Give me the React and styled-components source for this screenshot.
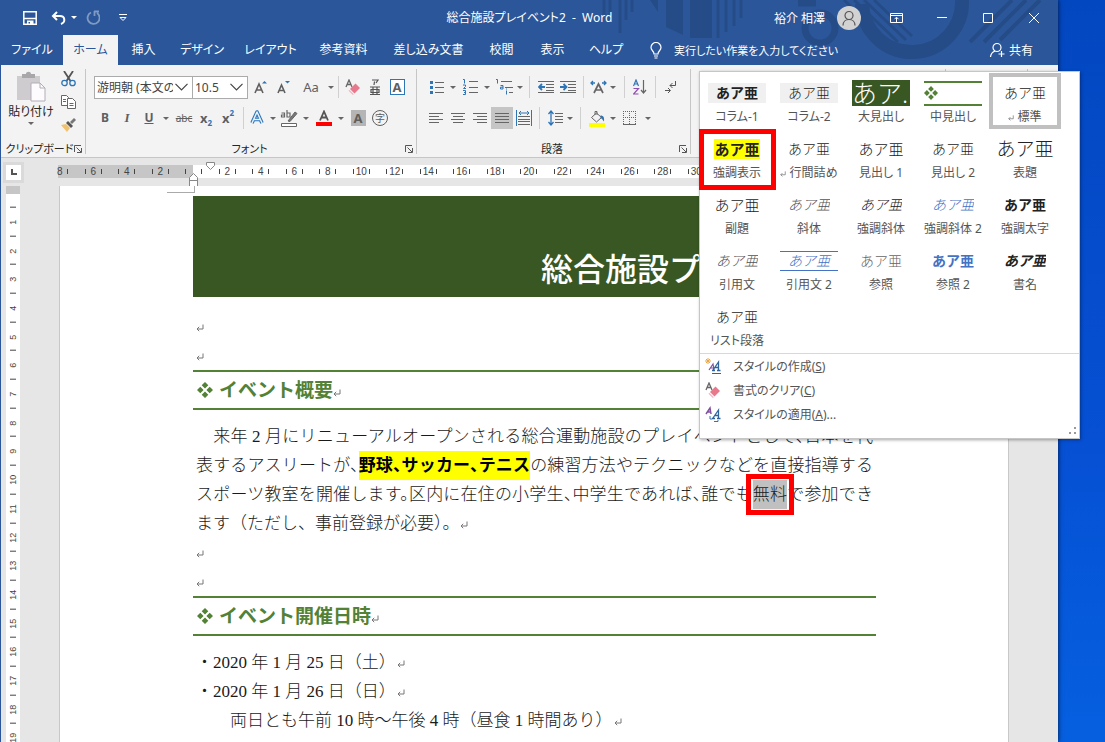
import React from "react";
import styled, { createGlobalStyle, ThemeProvider } from "styled-components";

const theme = {
  colors: {
    brand: "#2b579a",
    brandDark: "#254c87",
    ribbon: "#f3f3f3",
    workspace: "#e6e6e6",
    line: "#c6c6c6",
    text: "#262626",
    icon: "#5f5f5f",
    blue: "#2e75b6",
    green: "#538135",
    banner: "#385723",
    alert: "#ff0000",
    marker: "#ffff00",
  },
  fonts: {
    ui: '"Noto Sans", "Noto Sans CJK JP", sans-serif',
    body: '"Liberation Serif", "Noto Sans CJK JP", serif',
    ruler: '"Liberation Sans", sans-serif',
  },
};

const GlobalStyle = createGlobalStyle`
  * {
    box-sizing: border-box;
  }
  body {
    margin: 0;
    overflow: hidden;
  }
  button {
    border: 0;
    padding: 0;
    background: none;
    color: inherit;
    font: inherit;
  }
  svg {
    display: block;
    flex: none;
  }
`;

const Desktop = styled.div`
  height: 100vh;
  padding-right: 47px;
  background: linear-gradient(#0347c0, #0650d4 60%, #0560e0);
  font-family: ${(p) => p.theme.fonts.ui};
  font-size: 12px;
  font-feature-settings: "palt";
  color: ${(p) => p.theme.colors.text};
`;

const WordWindow = styled.main`
  position: relative;
  display: flex;
  flex-direction: column;
  height: 100%;
  border-left: 1px solid ${(p) => p.theme.colors.brand};
  background: ${(p) => p.theme.colors.workspace};
  box-shadow: 1px 0 4px rgb(0 0 0 / 50%);
`;

/* Title bar and tabs */

const Header = styled.header`
  position: relative;
  flex: none;
  background: ${(p) => p.theme.colors.brand};
  color: #fff;
`;

const HeaderArt = styled.svg`
  position: absolute;
  top: 0;
  right: 0;
  stroke: ${(p) => p.theme.colors.brandDark};
`;

const TitleBar = styled.div`
  position: relative;
  display: grid;
  grid-template-columns: 1fr auto 1fr;
  align-items: center;
  height: 35px;
`;

const QuickAccess = styled.div`
  display: flex;
  align-items: center;
  padding-left: 17px;
`;

const QuickButton = styled.button`
  display: flex;
  align-items: center;
  justify-content: center;
  width: ${(p) => p.$width}px;
  height: 24px;
  opacity: ${(p) => (p.$dim ? 0.4 : 1)};
`;

const DocTitle = styled.h1`
  margin: 0;
  font-size: 12px;
  font-weight: 400;
  line-height: 16px;
  white-space: pre;
`;

const Account = styled.div`
  display: flex;
  align-items: center;
  justify-content: flex-end;
  padding-right: 1px;
`;

const UserName = styled.span`
  margin-right: 12px;
`;

const Avatar = styled.span`
  display: flex;
  align-items: center;
  justify-content: center;
  width: 24px;
  height: 24px;
  margin-right: 12px;
  border-radius: 50%;
  background: #d2d2d2;
`;

const CaptionButton = styled.button`
  display: flex;
  align-items: center;
  justify-content: center;
  width: 46px;
  height: 32px;
`;

const TabBar = styled.nav`
  position: relative;
  display: flex;
  height: 30px;
`;

const Tab = styled.button`
  width: ${(p) => p.$width}px;
  line-height: 30px;
  text-align: center;
  background: ${(p) => (p.$active ? p.theme.colors.ribbon : "transparent")};
  color: ${(p) => (p.$active ? p.theme.colors.brand : "#fff")};
`;

const TellMe = styled.button`
  display: flex;
  align-items: center;
  gap: 12px;
  padding-left: 16px;
  font-size: 11px;
`;

const Share = styled.button`
  display: flex;
  align-items: center;
  gap: 4px;
  margin-left: auto;
  padding-right: 25px;
`;

/* Ribbon */

const Ribbon = styled.section`
  display: flex;
  flex: none;
  height: 93px;
  padding-top: 4px;
  border-bottom: 1px solid ${(p) => p.theme.colors.line};
  background: ${(p) => p.theme.colors.ribbon};
`;

const Group = styled.div`
  display: flex;
  flex-direction: column;
  flex: none;
  gap: 7px;
  width: ${(p) => p.$width}px;
  padding: 6px 0 0 ${(p) => p.$indent || 0}px;
  background: linear-gradient(${(p) => p.theme.colors.line}, ${(p) => p.theme.colors.line}) top right / 1px 85px
    no-repeat;
`;

const ToolRow = styled.div`
  display: flex;
  align-items: center;
  flex: none;
  height: 24px;
`;

const GroupLabel = styled.div`
  display: flex;
  align-items: center;
  flex: none;
  margin-top: 4px;
  padding-right: 4px;
  font-size: 11px;
  line-height: 16px;
  white-space: nowrap;
`;

const GroupName = styled.span`
  flex: 1;
  text-align: center;
`;

const ClipboardTools = styled.div`
  display: flex;
  flex: none;
  gap: 6px;
  height: 55px;
`;

const PasteButton = styled.button`
  display: flex;
  flex-direction: column;
  align-items: center;
  width: 52px;
  height: 55px;
  margin-top: -4px;
  line-height: 20px;
  white-space: nowrap;
`;

const ClipColumn = styled.div`
  display: flex;
  flex-direction: column;
  justify-content: space-between;
  margin-top: -7px;
  height: 68px;
`;

const Tool = styled.button`
  display: flex;
  align-items: center;
  justify-content: center;
  flex: none;
  width: ${(p) => p.$width || 22}px;
  height: 22px;
  background: ${(p) => (p.$pressed ? "#c5c5c5" : "transparent")};
  color: ${(p) => p.theme.colors.icon};
`;

const Letter = styled.span`
  font-size: ${(p) => p.$size || 13}px;
  font-weight: ${(p) => (p.$plain ? 400 : 700)};
  font-style: ${(p) => (p.$italic ? "italic" : "normal")};
  font-family: ${(p) => (p.$italic ? p.theme.fonts.body : "inherit")};
  text-decoration: ${(p) => p.$line || "none"};
  line-height: 16px;
`;

const Script = styled.span`
  align-self: ${(p) => (p.$up ? "flex-start" : "flex-end")};
  font-size: 8px;
  font-weight: 700;
  line-height: 12px;
  color: ${(p) => p.theme.colors.blue};
`;

const BoxedLetter = styled(Letter)`
  width: 15px;
  border: 1px solid ${(p) => (p.$filled ? "#b5b5b5" : p.theme.colors.blue)};
  background: ${(p) => (p.$filled ? "#b5b5b5" : "#fff")};
  line-height: 14px;
`;

const CircledLetter = styled(Letter)`
  width: 16px;
  border: 1px solid ${(p) => p.theme.colors.icon};
  border-radius: 50%;
  line-height: 14px;
`;

const Divider = styled.span`
  flex: none;
  width: ${(p) => p.$width}px;
  height: 22px;
  background: linear-gradient(#d0d0d0, #d0d0d0) center / 1px 100% no-repeat;
`;

const ComboBox = styled.label`
  display: flex;
  position: relative;
  align-items: center;
  flex: none;
  width: ${(p) => p.$width}px;
  height: 23px;
  margin-left: ${(p) => (p.$joined ? -1 : 0)}px;
  border: 1px solid #ababab;
  background: #fff;
  svg {
    position: absolute;
    right: 4px;
    pointer-events: none;
  }
`;

const ComboSelect = styled.select`
  appearance: none;
  width: calc(100% - 19px);
  padding: 0 0 0 2px;
  border: 0;
  background: none;
  color: #444;
  font: inherit;
  font-size: 12px;
  text-overflow: clip;
`;

/* Rulers */

const RulerRow = styled.div`
  display: flex;
  flex: none;
  align-items: center;
  height: 28px;
`;

const TabStop = styled.div`
  display: flex;
  align-items: center;
  justify-content: center;
  width: 21px;
  height: 21px;
  margin-left: 2px;
  border: 3px solid #dadada;
  background: #fff;
`;

const HorizontalRuler = styled.div`
  position: relative;
  display: grid;
  grid-template-columns: repeat(20, 1fr);
  align-items: center;
  width: 670px;
  height: 13px;
  margin-left: 19px;
  margin-top: -2px;
  background: linear-gradient(
    to right,
    transparent 15px,
    ${(p) => p.theme.colors.line} 15px,
    ${(p) => p.theme.colors.line} 150px,
    #fff 150px
  );
`;

const HorizontalMark = styled.span`
  height: 5px;
  margin: 0 25%;
  border: solid #444;
  border-width: 0 1px;
  border-left-color: ${(p) => (p.$first ? "transparent" : "#444")};
  font-family: ${(p) => p.theme.fonts.ruler};
  font-size: 10px;
  line-height: 5px;
  text-align: center;
  color: #444;
`;

const Indent = styled.svg`
  position: absolute;
  top: ${(p) => p.$top}px;
  left: ${(p) => p.$left}px;
`;

const Workspace = styled.div`
  display: flex;
  flex: 1;
  min-height: 0;
  overflow: hidden;
`;

const VerticalRuler = styled.div`
  flex: none;
  width: 14px;
  height: 600px;
  margin: 0 39px 0 5px;
  padding-top: 21px;
  background: linear-gradient(${(p) => p.theme.colors.line} 8px, #fff 8px);
`;

const VerticalMarks = styled.div`
  display: grid;
  grid-template-rows: repeat(19, 1fr);
  justify-content: center;
  height: 545px;
`;

const VerticalMark = styled.span`
  display: flex;
  align-items: center;
  justify-content: center;
  width: 6px;
  border-bottom: 1px solid #444;
  font-family: ${(p) => p.theme.fonts.ruler};
  font-size: 9px;
  line-height: 6px;
  color: #444;
  writing-mode: vertical-rl;
  rotate: 180deg;
`;

/* Document */

const Page = styled.article`
  position: relative;
  flex: 1;
  margin-right: 49px;
  padding: 10px 132px 0 133px;
  border: solid #c8c8c8;
  border-width: 0 1px;
  background: #fff;
  font-family: ${(p) => p.theme.fonts.body};
  font-feature-settings: normal;
  font-size: 17px;
  font-weight: 300;
  line-height: 29px;
  color: #1a1a1a;
  white-space: nowrap;
`;

const MarginCorner = styled.span`
  position: absolute;
  top: 0;
  left: 107px;
  width: 28px;
  height: 7px;
  border: solid #aaa;
  border-width: 0 1px 1px 0;
`;

const Banner = styled.h2`
  height: 101px;
  margin: 0 0 15px;
  padding: 54px 15px 0 0;
  overflow: hidden;
  background: ${(p) => p.theme.colors.banner};
  color: #fff;
  font-size: 32px;
  font-weight: 500;
  line-height: 40px;
  text-align: right;
`;

const SectionHeading = styled.h3`
  display: flex;
  align-items: center;
  gap: 6px;
  height: 40px;
  margin: 0 0 12px;
  padding-left: 4px;
  border: solid ${(p) => p.theme.colors.green};
  border-width: 2px 0;
  color: ${(p) => p.theme.colors.green};
  font-size: 19px;
  font-weight: 700;
`;

const Paragraph = styled.p`
  margin: 0;
  padding: 0 3px;
  text-indent: ${(p) => p.$indent || 0}em;
`;

const FullLine = styled.span`
  display: block;
  font-feature-settings: "halt";
  text-align: justify;
  text-align-last: justify;
`;

const Marked = styled.mark`
  padding: 5px 0;
  background: ${(p) => p.theme.colors.marker};
  color: #000;
  font-weight: 700;
`;

const Picked = styled.span`
  position: relative;
  padding: 5px 0;
  background: #c0c0c0;
  &::after {
    content: "";
    position: absolute;
    inset: -6px -7px;
    border: 5px solid ${(p) => p.theme.colors.alert};
  }
`;

const ReturnIcon = styled.svg`
  display: inline-block;
  margin-left: ${(p) => p.$gap || 0}px;
  vertical-align: 0;
`;

/* Style gallery */

const Gallery = styled.aside`
  position: absolute;
  top: 71px;
  right: -22px;
  width: 381px;
  border: 1px solid ${(p) => p.theme.colors.line};
  background: #fff;
  box-shadow: 1px 1px 3px rgb(0 0 0 / 35%);
  color: #555;
`;

const StyleGrid = styled.div`
  display: grid;
  grid-template-columns: repeat(5, 72px);
  grid-auto-rows: 56px;
  padding: 1px 1px 0;
`;

const StyleCell = styled.button`
  position: relative;
  display: flex;
  flex-direction: column;
  align-items: center;
  padding-top: 4px;
  box-shadow: ${(p) => (p.$current ? "inset 0 0 0 4px #c0c0c0" : "none")};
  white-space: nowrap;
  &::after {
    content: "";
    display: ${(p) => (p.$framed ? "block" : "none")};
    position: absolute;
    inset: 0 -3px -5px -2px;
    border: 5px solid ${(p) => p.theme.colors.alert};
  }
`;

const SampleArea = styled.span`
  display: flex;
  align-items: center;
  justify-content: center;
  width: 58px;
  height: 32px;
`;

const Sample = styled.span`
  display: flex;
  align-items: center;
  justify-content: ${(p) => (p.$start ? "flex-start" : "center")};
  flex: ${(p) => (p.$wide ? "1" : "none")};
  overflow: hidden;
  height: ${(p) => p.$height || 20}px;
  border: solid ${(p) => p.$rule || "transparent"};
  border-width: ${(p) => (p.$rule ? p.$ruleWidth || 1 : 0)}px 0;
  background: ${(p) => p.$fill || "transparent"};
  color: ${(p) => p.$color || "#222"};
  font-size: ${(p) => p.$size || 14}px;
  font-style: ${(p) => (p.$italic ? "italic" : "normal")};
  font-weight: ${(p) => (p.$bold ? 700 : 300)};
  font-feature-settings: normal;
  line-height: 20px;
`;

const StyleName = styled.span`
  line-height: 16px;
`;

const MenuList = styled.div`
  position: relative;
  padding: 0 0 12px;
  border-top: 1px solid #d8d8d8;
`;

const MenuItem = styled.button`
  display: flex;
  align-items: center;
  gap: 12px;
  width: 100%;
  height: 24px;
  padding-left: 5px;
`;

const Grip = styled.svg`
  position: absolute;
  right: 3px;
  bottom: 3px;
`;

const DropArrow = ({ width, label }) => (
  <Tool $width={width} aria-label={label}>
    <svg width="6" height="3" viewBox="0 0 6 3">
      <path d="M0 0h6L3 3z" fill="#666" />
    </svg>
  </Tool>
);

const Chevron = () => (
  <svg width="13" height="8" viewBox="0 0 13 8" fill="none" stroke="#444" strokeWidth="1.2">
    <path d="M.5 .8l6 6 6-6" />
  </svg>
);

const Launcher = () => (
  <svg width="8" height="8" viewBox="0 0 8 8" fill="none" stroke="#555">
    <path d="M.5 7V.5H7M2.5 2.5L7 7M7.500 3v4.500H3" />
  </svg>
);

const Return = ({ gap, size = 8 }) => (
  <ReturnIcon $gap={gap} width={size} height={size} viewBox="0 0 8 8" fill="none" stroke="#777">
    <path d="M7 .5v4.500H1M3.200 2.800L1 5l2.200 2.200" />
  </ReturnIcon>
);

const Diamonds = ({ size = 16 }) => (
  <svg width={size} height={size} viewBox="0 0 16 16" fill="#538135">
    <path d="M8 0l3.300 3.300L8 6.600 4.700 3.300zM8 9.400l3.300 3.300L8 16l-3.300-3.300zM3.300 4.700L6.600 8l-3.300 3.300L0 8zM12.700 4.700L16 8l-3.300 3.300L9.400 8z" />
  </svg>
);

const Person = ({ stroke, plus }) => (
  <svg width="16" height="16" viewBox="0 0 16 16" fill="none" stroke={stroke} strokeWidth="1.2">
    <circle cx="8" cy="5.500" r="4" />
    <path d={plus ? "M1.500 15c.3-3 2-5 4.500-6M12.500 9v6M9.500 12h6" : "M2 15.500c0-3.500 2.500-6 6-6s6 2.500 6 6"} />
  </svg>
);

const Eraser = () => (
  <svg width="16" height="16" viewBox="0 0 16 16">
    <path d="M1 8L4 1l3 7M2 5.500h4" fill="none" stroke="#666" strokeWidth="1.3" />
    <path d="M5 10l5.500-5.500 4.500 4.500L9.500 14.500z" fill="#e8798d" />
    <path d="M4.300 10.700l4.500 4.500-1 .8-4.300-4.300z" fill="#f4b5c0" />
  </svg>
);

const Lines = ({ widths, align }) =>
  widths.map((w, i) => {
    const offset = align === "left" ? 0 : align === "right" ? 14 - w : (14 - w) / 2;
    return <path key={i} d={`M${offset} ${1.5 + i * 3}h${w}`} />;
  });

const AlignIcon = ({ align, widths }) => (
  <svg width="14" height="12" viewBox="0 0 14 12" stroke="#666">
    <Lines widths={widths} align={align} />
  </svg>
);

const BulletIcon = () => (
  <svg width="14" height="15" viewBox="0 0 14 15" stroke="#666">
    <path d="M5 2.500h9M5 7.500h9M5 12.500h9" />
    <path d="M0 2.500h3M0 7.500h3M0 12.500h3" stroke="#2e75b6" strokeWidth="3" />
  </svg>
);

const NumberIcon = () => (
  <svg width="15" height="16" viewBox="0 0 15 16" fill="none" stroke="#666">
    <path d="M6 2.500h9M6 8.500h9M6 13.500h9" />
    <path d="M0 .5h1.500v4M0 6h2.500v1.500L.5 9.500H3M0 11.500h2.500v4H0M1 13.500h1.500" stroke="#2e75b6" />
  </svg>
);

const MultiLevelIcon = () => (
  <svg width="17" height="16" viewBox="0 0 17 16" fill="none" stroke="#666">
    <path d="M5 2.500h11M9 8.500h8M13 13.500h4" />
    <path d="M0 .5h1.500v4M4.500 6.500h2.500v3.500H4.500V8.200H7M10.500 11.500v4M10.500 9.500v1" stroke="#2e75b6" />
  </svg>
);

const IndentIcon = ({ out }) => (
  <svg width="16" height="14" viewBox="0 0 16 14" fill="none" stroke="#666">
    <path d="M0 1.500h16M8 4.500h8M8 7.500h8M8 10.500h8M0 12.500h16" />
    <path d={out ? "M7 7H1M4 4L1 7l3 3" : "M0 7h6M3.500 4l3 3-3 3"} stroke="#2e75b6" strokeWidth="1.800" />
  </svg>
);

const CharWidthIcon = () => (
  <svg width="17" height="14" viewBox="0 0 17 14" fill="none">
    <path d="M4 13l4.500-9 4.500 9M6 10h5" stroke="#666" strokeWidth="1.700" />
    <path d="M5 3H1M3 1L1 3l2 2M12 3h4M14 1l2 2-2 2" stroke="#2e75b6" strokeWidth="1.300" />
  </svg>
);

const SortIcon = () => (
  <svg width="14" height="16" viewBox="0 0 14 16" fill="none">
    <path d="M.5 7L3 1l2.500 6M1.500 5h3" stroke="#2e75b6" strokeWidth="1.200" />
    <path d="M.5 9.500h5l-5 5.500h5" stroke="#8e4fae" strokeWidth="1.200" />
    <path d="M10.500 1v13M8 11l2.500 3 2.500-3" stroke="#666" strokeWidth="1.200" />
  </svg>
);

const MarksIcon = () => (
  <svg width="12" height="14" viewBox="0 0 12 14" fill="none" stroke="#555">
    <path d="M10.500 1v4.500H5M7.500 3L5 5.500 7.500 8M0 10.500h5M3 8l2.500 2.500L3 13" />
  </svg>
);

const DistributeIcon = () => (
  <svg width="16" height="16" viewBox="0 0 16 16" fill="none">
    <path d="M.5 0v16M15.500 0v16M3 3h10M5 1L3 3l2 2M11 1l2 2-2 2" stroke="#2e75b6" />
    <path d="M2 6.500h12M2 9.500h12M2 11.500h12M2 14.500h12" stroke="#666" />
  </svg>
);

const LineSpacingIcon = () => (
  <svg width="15" height="16" viewBox="0 0 15 16" fill="none">
    <path d="M3 1v14M.5 4L3 1l2.500 3M.5 12L3 15l2.500-3" stroke="#2e75b6" strokeWidth="1.300" />
    <path d="M7 3.500h8M7 6.500h8M7 9.500h8M7 12.500h8" stroke="#666" />
  </svg>
);

const FillIcon = () => (
  <svg width="17" height="17" viewBox="0 0 17 17" fill="none">
    <path d="M2.500 7.500l5-4.500 5 4.500-5 4.500zM6 5V1.500h2V5" stroke="#666" />
    <path d="M11.500 5.500c3 0 4 2 3.500 6-1-.5-1.500-3-3.500-3.500z" fill="#2e75b6" />
    <path d="M0 13h16v4H0z" fill="#ffff00" />
  </svg>
);

const BorderIcon = () => (
  <svg width="14" height="14" viewBox="0 0 14 14" fill="none" stroke="#666">
    <path d="M.5 0v13M6.500 0v13M12.500 0v13M0 .5h13M0 6.500h13" strokeDasharray="1 1" />
    <path d="M0 13.500h13" />
  </svg>
);

const OutlineA = () => (
  <svg width="14" height="16" viewBox="0 0 14 16" fill="none" strokeLinejoin="round">
    <path d="M2 13L7 2l5 11M4 9.500h6" stroke="#2e75b6" strokeWidth="3.600" />
    <path d="M2 13L7 2l5 11M4 9.500h6" stroke="#e6f0fa" strokeWidth="1.500" />
  </svg>
);

const HighlighterIcon = () => (
  <svg width="18" height="18" viewBox="0 0 18 18" fill="none" stroke="#666">
    <path d="M1.500 4h3v4h-3V6h3M7 1v7h3V4H7" strokeWidth="1.200" />
    <path d="M8 12l7-9 2 1.500-7 8z" fill="#777" />
    <path d="M1.500 14.500h15v3h-15z" fill="#fff" />
  </svg>
);

const FontColorIcon = () => (
  <svg width="16" height="16" viewBox="0 0 16 16" fill="none">
    <path d="M4 10.500l4-9 4 9M5.500 7.500h5" stroke="#555" strokeWidth="1.800" />
    <path d="M0 12h16v4H0z" fill="#ff0000" />
  </svg>
);

const SizeIcon = ({ grow }) => (
  <svg width="13" height="15" viewBox="0 0 13 15" fill="none">
    <path
      d={grow ? "M1 13l4-9 4 9M2.500 10h5" : "M1 13l3.500-8L8 13M2.300 10.500h4.400"}
      stroke="#5f5f5f"
      strokeWidth="1.600"
    />
    <path d={grow ? "M8 3.500L10.500 1 13 3.500z" : "M8 1h5l-2.500 2.500z"} fill="#2e75b6" />
  </svg>
);

const PasteIcon = () => (
  <svg width="30" height="31" viewBox="0 0 30 31">
    <path d="M1 5h23v24H1z" fill="#cfcccf" />
    <path d="M6 7V3h4c0-3 5-3 5 0h4v4z" fill="#aaa7aa" />
    <path d="M15 12h9l5 5v13H15z" fill="#fdfbfd" stroke="#b3adb8" />
    <path d="M24 12v5h5" fill="none" stroke="#b3adb8" />
  </svg>
);

const CutIcon = () => (
  <svg width="15" height="16" viewBox="0 0 15 16" fill="none">
    <path d="M3 0l6.500 10M12 0L5.500 10" stroke="#555" strokeWidth="1.800" />
    <circle cx="3.500" cy="12" r="2.700" stroke="#2e75b6" strokeWidth="1.300" />
    <circle cx="11.500" cy="12" r="2.700" stroke="#2e75b6" strokeWidth="1.300" />
  </svg>
);

const CopyIcon = () => (
  <svg width="15" height="14" viewBox="0 0 15 14" fill="#fff" stroke="#666">
    <path d="M.5 .5h5l2 2v8h-7z" />
    <path d="M6.500 3.500h5l3 3v7h-8z" />
    <path d="M2 4.500h3M2 6.500h3M8.500 8.500h4M8.500 10.500h4" stroke="#2e75b6" />
  </svg>
);

const BrushIcon = () => (
  <svg width="16" height="14" viewBox="0 0 16 14">
    <path d="M1 7l5-1 4 4-3 4z" fill="#f0c26f" />
    <path d="M6 5l2-2 5 5-2 2z" fill="#555" />
    <path d="M10 4l4-4 2 2-4 4z" fill="#777" />
  </svg>
);

const StyleMenuIcon = ({ kind }) => (
  <svg width="16" height="16" viewBox="0 0 16 16" fill="none">
    {kind === "new" ? (
      <>
        <path d="M3 0v6M0 3h6M1 1l4 4M5 1L1 5" stroke="#eba743" />
        <path d="M4 12l4-6 1 6M5.500 10h3" stroke="#8250a0" strokeWidth="1.200" />
      </>
    ) : (
      <path d="M1 8l4-6 1 6M2.500 6h3" stroke="#8250a0" strokeWidth="1.500" />
    )}
    <path d="M8 12l5.500-8v8M10 9.500h3M7 12.500h3M12 12.500h3.500" stroke="#2e659e" strokeWidth="1.300" />
    {kind === "new" ? (
      <path d="M7 15.500h9" stroke="#2e659e" />
    ) : (
      <path d="M9 15.500h4V14M5 10v3h2" stroke="#2e75b6" />
    )}
  </svg>
);

const tabs = [
  { name: "ファイル", width: 62 },
  { name: "ホーム", width: 55, active: true },
  { name: "挿入", width: 51 },
  { name: "デザイン", width: 66 },
  { name: "レイアウト", width: 71 },
  { name: "参考資料", width: 75 },
  { name: "差し込み文書", width: 95 },
  { name: "校閲", width: 51 },
  { name: "表示", width: 51 },
  { name: "ヘルプ", width: 56 },
];

const styleItems = [
  { name: "コラム-1", wide: true, fill: "#f0f0f0", bold: true },
  { name: "コラム-2", wide: true, fill: "#f0f0f0" },
  { name: "大見出し", text: "あア.", wide: true, start: true, fill: "#385723", color: "#fff", size: 25, height: 26 },
  {
    name: "中見出し",
    text: <Diamonds size={14} />,
    wide: true,
    start: true,
    rule: "#538135",
    ruleWidth: 2,
    height: 25,
  },
  { name: "標準", mark: true, current: true },
  { name: "強調表示", fill: "#ffff00", bold: true, framed: true, size: 15 },
  { name: "行間詰め", mark: true },
  { name: "見出し 1", size: 15 },
  { name: "見出し 2" },
  { name: "表題", size: 19, height: 24 },
  { name: "副題", size: 15 },
  { name: "斜体", italic: true, color: "#555" },
  { name: "強調斜体", italic: true },
  { name: "強調斜体 2", italic: true, color: "#4472c4" },
  { name: "強調太字", bold: true },
  { name: "引用文", italic: true, color: "#555" },
  { name: "引用文 2", italic: true, color: "#4472c4", wide: true, rule: "#4472c4" },
  { name: "参照", color: "#666" },
  { name: "参照 2", bold: true, color: "#4472c4" },
  { name: "書名", bold: true, italic: true },
  { name: "リスト段落" },
];

const horizontalMarks = Array.from({ length: 20 }, (_, i) => Math.abs(i * 2 - 8));
const verticalMarks = Array.from({ length: 19 }, (_, i) => i + 1);

const WordHeader = () => (
  <Header>
    <HeaderArt width="470" height="65" viewBox="0 0 470 65" fill="none" aria-hidden="true">
      <path d="M16 0v16M22 0v22M32 0v33M38 0v20M44 0v12" strokeWidth="3" />
      <path d="M62 0h8v12zM78 0h17v35l-17-8zM102 0h22v38h-22z" fill="#254c87" stroke="none" />
      <path d="M130 0v38M138 0v32M146 0v26M153 0v18" strokeWidth="3" />
      <path d="M210 3h18" strokeWidth="7" />
      <circle cx="232" cy="28" r="15" strokeWidth="7" />
      <path d="M256 0l48 46M266 0l44 42M276 0l42 40M286 0l38 36" strokeWidth="3" />
      <path d="M274 4a50 50 0 0 0 100-4" strokeWidth="14" />
      <path d="M424 0l-42 42M438 0l-42 42M452 0l-40 40" strokeWidth="4" />
    </HeaderArt>
    <TitleBar>
      <QuickAccess>
        <QuickButton $width={24} aria-label="上書き保存">
          <svg width="14" height="14" viewBox="0 0 14 14" fill="none" stroke="#fff" strokeWidth="1.500">
            <path d="M.8 .8h12.400v12.400H.8z" />
            <path d="M1 7.500h12" />
            <path d="M4 9.500h6.500V13H7v-2H5.500v2H4z" fill="#fff" stroke="none" />
          </svg>
        </QuickButton>
        <QuickButton $width={32} aria-label="元に戻す">
          <svg width="15" height="14" viewBox="0 0 15 14" fill="none" stroke="#fff" strokeWidth="2">
            <path d="M6 1L2 5l4 4M2 5h7c5 0 6 6 1 8" />
          </svg>
        </QuickButton>
        <QuickButton $width={0} aria-label="元に戻す履歴">
          <svg width="6" height="3" viewBox="0 0 6 3">
            <path d="M0 0h6L3 3z" fill="#fff" />
          </svg>
        </QuickButton>
        <QuickButton $width={38} $dim aria-label="やり直し">
          <svg width="14" height="15" viewBox="0 0 14 15" fill="none" stroke="#fff" strokeWidth="1.800">
            <path d="M8 1.500h5M8.500 1v5M5 2.500a6 6 0 1 0 6 .5" />
          </svg>
        </QuickButton>
        <QuickButton $width={22} aria-label="クイック アクセス ツール バーのユーザー設定">
          <svg width="8" height="8" viewBox="0 0 8 8" fill="none" stroke="#fff">
            <path d="M0 .5h8M1 3.500h6L4 6.500z" />
          </svg>
        </QuickButton>
      </QuickAccess>
      <DocTitle>総合施設プレイベント2  -  Word</DocTitle>
      <Account>
        <UserName>裕介 相澤</UserName>
        <Avatar>
          <Person stroke="#555" />
        </Avatar>
        <CaptionButton aria-label="リボンの表示オプション">
          <svg width="13" height="10" viewBox="0 0 13 10" fill="none" stroke="#fff">
            <path d="M.5 .5h12v9H.5zM.5 2.500h12M6.500 9V4.500M4.500 6.200l2-2 2 2" />
          </svg>
        </CaptionButton>
        <CaptionButton aria-label="最小化">
          <svg width="10" height="1">
            <path d="M0 .5h10" stroke="#fff" />
          </svg>
        </CaptionButton>
        <CaptionButton aria-label="最大化">
          <svg width="10" height="10" fill="none" stroke="#fff">
            <path d="M.5 .5h9v9h-9z" />
          </svg>
        </CaptionButton>
        <CaptionButton aria-label="閉じる">
          <svg width="10" height="10" fill="none" stroke="#fff">
            <path d="M0 0l10 10M10 0L0 10" />
          </svg>
        </CaptionButton>
      </Account>
    </TitleBar>
    <TabBar>
      {tabs.map((tab) => (
        <Tab key={tab.name} $width={tab.width} $active={tab.active}>
          {tab.name}
        </Tab>
      ))}
      <TellMe>
        <svg width="12" height="17" viewBox="0 0 12 17" fill="none" stroke="#fff" strokeWidth="1.200">
          <path d="M4 12c0-3-3-3.500-3-6.500a5 5 0 0 1 10 0C11 8.500 8 9 8 12zM4 14h4M4.500 16h3" />
        </svg>
        実行したい作業を入力してください
      </TellMe>
      <Share>
        <Person stroke="#fff" plus />
        共有
      </Share>
    </TabBar>
  </Header>
);

const LabelRow = ({ children }) => (
  <GroupLabel>
    <GroupName>{children}</GroupName>
    <Launcher />
  </GroupLabel>
);

const WordRibbon = () => (
  <Ribbon>
    <Group $width={85} $indent={4}>
      <ClipboardTools>
        <PasteButton>
          <PasteIcon />
          貼り付け
          <svg width="6" height="3" viewBox="0 0 6 3">
            <path d="M0 0h6L3 3z" fill="#666" />
          </svg>
        </PasteButton>
        <ClipColumn>
          <Tool $width={10} aria-label="切り取り">
            <CutIcon />
          </Tool>
          <Tool $width={10} aria-label="コピー">
            <CopyIcon />
          </Tool>
          <Tool $width={10} aria-label="書式のコピー">
            <BrushIcon />
          </Tool>
        </ClipColumn>
      </ClipboardTools>
      <LabelRow>クリップボード</LabelRow>
    </Group>

    <Group $width={331} $indent={8}>
      <ToolRow>
        <ComboBox $width={99}>
          <ComboSelect aria-label="フォント">
            <option>游明朝 (本文のフォント)</option>
          </ComboSelect>
          <Chevron />
        </ComboBox>
        <ComboBox $width={56} $joined>
          <ComboSelect aria-label="フォント サイズ">
            <option>10.5</option>
          </ComboSelect>
          <Chevron />
        </ComboBox>
        <Tool $width={24} aria-label="拡大">
          <SizeIcon grow />
        </Tool>
        <Tool aria-label="縮小">
          <SizeIcon />
        </Tool>
        <Tool $width={34} aria-label="文字種の変換">
          <Letter $plain>Aa</Letter>
        </Tool>
        <DropArrow width={6} label="文字種" />
        <Divider $width={8} />
        <Tool aria-label="書式のクリア">
          <Eraser />
        </Tool>
        <Tool aria-label="ルビ">
          <svg width="12" height="17" viewBox="0 0 12 17" fill="none" stroke="#555" strokeWidth="1.200">
            <path d="M3 1h6L7 4M5.500 2.500L5 6M1 8h10M1 15.500h10M4 8v7M8 8v7M2 10.500h8v3H2z" />
          </svg>
        </Tool>
        <Tool aria-label="囲み線">
          <BoxedLetter>A</BoxedLetter>
        </Tool>
      </ToolRow>
      <ToolRow>
        <Tool>
          <Letter $size={12}>B</Letter>
        </Tool>
        <Tool>
          <Letter $italic>I</Letter>
        </Tool>
        <Tool>
          <Letter $size={12} $line="underline">
            U
          </Letter>
        </Tool>
        <DropArrow width={12} label="下線の種類" />
        <Tool $width={24}>
          <Letter $plain $size={10} $line="line-through">
            abc
          </Letter>
        </Tool>
        <Tool $width={20}>
          <Letter>x</Letter>
          <Script>2</Script>
        </Tool>
        <Tool $width={24}>
          <Letter>x</Letter>
          <Script $up>2</Script>
        </Tool>
        <Divider $width={6} />
        <Tool aria-label="文字の効果">
          <OutlineA />
        </Tool>
        <DropArrow width={10} label="文字の効果の種類" />
        <Tool aria-label="蛍光ペンの色">
          <HighlighterIcon />
        </Tool>
        <DropArrow width={12} label="蛍光ペンの種類" />
        <Tool $width={24} aria-label="フォントの色">
          <FontColorIcon />
        </Tool>
        <DropArrow width={10} label="フォントの色の種類" />
        <Tool $width={24} aria-label="文字の網かけ">
          <BoxedLetter $filled>A</BoxedLetter>
        </Tool>
        <Tool $width={20} aria-label="囲い文字">
          <CircledLetter $plain $size={10}>
            字
          </CircledLetter>
        </Tool>
      </ToolRow>
      <LabelRow>フォント</LabelRow>
    </Group>

    <Group $width={274} $indent={8}>
      <ToolRow>
        <Tool $width={24} aria-label="箇条書き">
          <BulletIcon />
        </Tool>
        <DropArrow width={8} label="箇条書きの種類" />
        <Tool $width={26} aria-label="段落番号">
          <NumberIcon />
        </Tool>
        <DropArrow width={8} label="段落番号の種類" />
        <Tool $width={26} aria-label="アウトライン">
          <MultiLevelIcon />
        </Tool>
        <DropArrow width={6} label="アウトラインの種類" />
        <Divider $width={12} />
        <Tool aria-label="インデントを減らす">
          <IndentIcon out />
        </Tool>
        <Tool aria-label="インデントを増やす">
          <IndentIcon />
        </Tool>
        <Divider $width={8} />
        <Tool aria-label="拡張書式">
          <CharWidthIcon />
        </Tool>
        <DropArrow width={8} label="拡張書式の種類" />
        <Divider $width={14} />
        <Tool $width={18} aria-label="並べ替え">
          <SortIcon />
        </Tool>
        <Divider $width={12} />
        <Tool $width={20} aria-label="編集記号">
          <MarksIcon />
        </Tool>
      </ToolRow>
      <ToolRow>
        <Tool aria-label="左揃え">
          <AlignIcon align="left" widths={[14, 10, 14, 10]} />
        </Tool>
        <Tool aria-label="中央揃え">
          <AlignIcon align="center" widths={[14, 10, 14, 10]} />
        </Tool>
        <Tool aria-label="右揃え">
          <AlignIcon align="right" widths={[14, 10, 14, 10]} />
        </Tool>
        <Tool $pressed aria-label="両端揃え">
          <AlignIcon align="left" widths={[14, 14, 14, 14]} />
        </Tool>
        <Tool aria-label="均等割り付け">
          <DistributeIcon />
        </Tool>
        <Divider $width={8} />
        <Tool $width={24} aria-label="行と段落の間隔">
          <LineSpacingIcon />
        </Tool>
        <DropArrow width={6} label="間隔の種類" />
        <Divider $width={14} />
        <Tool $width={20} aria-label="塗りつぶし">
          <FillIcon />
        </Tool>
        <DropArrow width={12} label="塗りつぶしの色" />
        <Tool aria-label="罫線">
          <BorderIcon />
        </Tool>
        <DropArrow width={14} label="罫線の種類" />
      </ToolRow>
      <LabelRow>段落</LabelRow>
    </Group>
    <Group $width={255} />
    <Group $width={82} />
  </Ribbon>
);

const WordDocument = () => (
  <Page>
    <MarginCorner />
    <Banner>総合施設プレイベント</Banner>
    <Paragraph>
      <Return />
    </Paragraph>
    <Paragraph>
      <Return />
    </Paragraph>
    <SectionHeading>
      <Diamonds />
      <span>
        イベント概要
        <Return />
      </span>
    </SectionHeading>
    <Paragraph>
      <FullLine>{"　来年 2 月にリニューアルオープンされる総合運動施設のプレイベントとして、日本を代"}</FullLine>
      <FullLine>
        表するアスリートが、<Marked>野球、サッカー、テニス</Marked>の練習方法やテクニックなどを直接指導する
      </FullLine>
      <FullLine>
        スポーツ教室を開催します。区内に在住の小学生、中学生であれば、誰でも<Picked>無料</Picked>で参加でき
      </FullLine>
      ます（ただし、事前登録が必要）。
      <Return />
    </Paragraph>
    <Paragraph>
      <Return />
    </Paragraph>
    <Paragraph>
      <Return />
    </Paragraph>
    <SectionHeading>
      <Diamonds />
      <span>
        イベント開催日時
        <Return />
      </span>
    </SectionHeading>
    <Paragraph>
      ・2020 年 1 月 25 日（土）
      <Return gap={1} />
    </Paragraph>
    <Paragraph>
      ・2020 年 1 月 26 日（日）
      <Return gap={1} />
    </Paragraph>
    <Paragraph $indent={2}>
      両日とも午前 10 時～午後 4 時（昼食 1 時間あり）
      <Return gap={1} />
    </Paragraph>
  </Page>
);

const StyleGallery = () => (
  <Gallery>
    <StyleGrid>
      {styleItems.map((item) => (
        <StyleCell key={item.name} $current={item.current} $framed={item.framed}>
          <SampleArea>
            <Sample
              $wide={item.wide}
              $start={item.start}
              $fill={item.fill}
              $rule={item.rule}
              $ruleWidth={item.ruleWidth}
              $color={item.color}
              $size={item.size}
              $height={item.height}
              $bold={item.bold}
              $italic={item.italic}
            >
              {item.text || "あア亜"}
            </Sample>
          </SampleArea>
          <StyleName>
            {item.mark && <Return size={6} />} {item.name}
          </StyleName>
        </StyleCell>
      ))}
    </StyleGrid>
    <MenuList>
      <MenuItem>
        <StyleMenuIcon kind="new" />
        <span>
          スタイルの作成(<u>S</u>)
        </span>
      </MenuItem>
      <MenuItem>
        <Eraser />
        <span>
          書式のクリア(<u>C</u>)
        </span>
      </MenuItem>
      <MenuItem>
        <StyleMenuIcon kind="apply" />
        <span>
          スタイルの適用(<u>A</u>)...
        </span>
      </MenuItem>
      <Grip width="8" height="8" viewBox="0 0 8 8" fill="#999">
        <path d="M6 0h2v2H6zM6 5h2v2H6zM1 5h2v2H1z" />
      </Grip>
    </MenuList>
  </Gallery>
);

const App = () => {
  return (
    <ThemeProvider theme={theme}>
      <GlobalStyle />
      <Desktop>
        <WordWindow>
          <WordHeader />
          <WordRibbon />
          <RulerRow>
            <TabStop>
              <svg width="6" height="6" viewBox="0 0 6 6">
                <path d="M1 0v5h5" fill="none" stroke="#555" strokeWidth="2" />
              </svg>
            </TabStop>
            <HorizontalRuler>
              {horizontalMarks.map((mark, i) => (
                <HorizontalMark key={i} $first={i === 0}>
                  {mark || ""}
                </HorizontalMark>
              ))}
              <Indent $top={-3} $left={163} width="9" height="8" viewBox="0 0 9 8">
                <path d="M.5 .5h8v3l-4 4-4-4z" fill="#fff" stroke="#888" />
              </Indent>
              <Indent $top={8} $left={146} width="9" height="14" viewBox="0 0 9 14">
                <path d="M.5 13.500v-9l4-4 4 4v9zM.5 7.500h8" fill="#fff" stroke="#888" />
              </Indent>
            </HorizontalRuler>
          </RulerRow>
          <Workspace>
            <VerticalRuler>
              <VerticalMarks>
                {verticalMarks.map((mark) => (
                  <VerticalMark key={mark}>{mark}</VerticalMark>
                ))}
              </VerticalMarks>
            </VerticalRuler>
            <WordDocument />
          </Workspace>
          <StyleGallery />
        </WordWindow>
      </Desktop>
    </ThemeProvider>
  );
};

export default App;
